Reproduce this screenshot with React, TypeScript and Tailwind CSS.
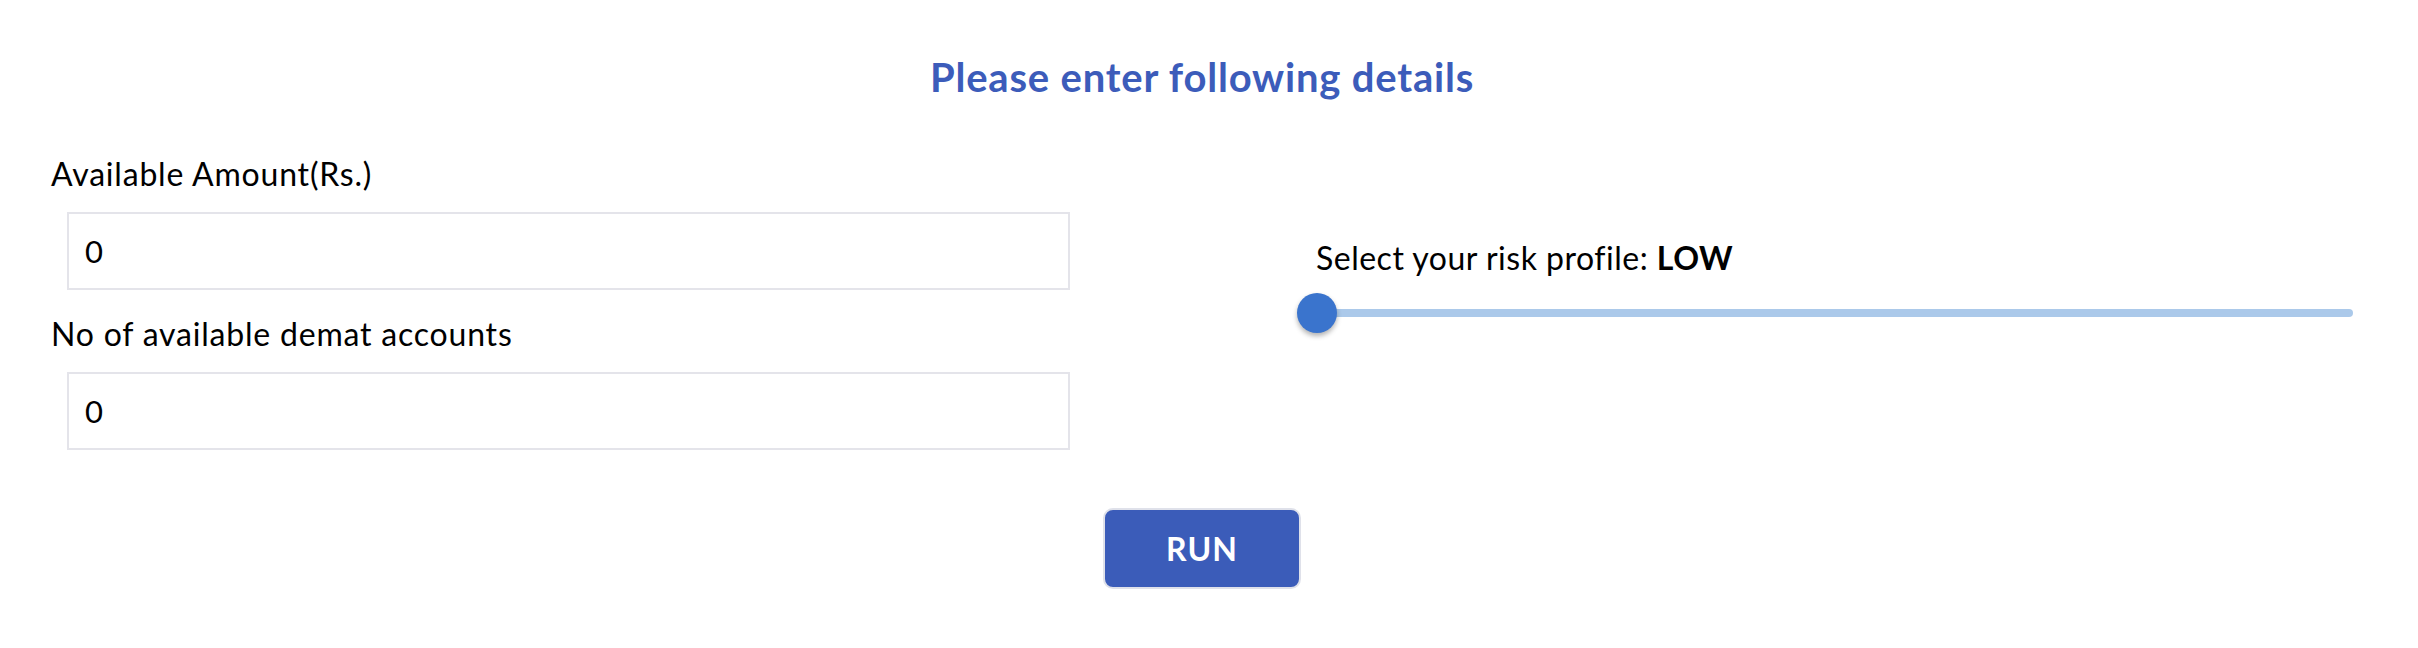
const Field = ({ label, value, top }: { label: string; value: string; top: string }) => (
  <div className={top}>
    <p className="text-[32px] leading-none tracking-[0.8px] text-black">{label}</p>
    <div className="mt-[22px] ml-[16px] w-[1003px] h-[78px] border-2 border-[#e4e4ea] flex items-center pl-[16px]">
      <span className="text-[31px] leading-none text-black">{value}</span>
    </div>
  </div>
);

const RiskSlider = () => (
  <div className="relative w-[1076px] h-[40px]">
    <div className="absolute left-[20px] right-[20px] top-[16px] h-[8px] rounded-full bg-[#abc9ea]" />
    <div className="absolute left-0 top-0 size-[40px] rounded-full bg-[#3a74cd] shadow-[0_3px_5px_rgba(0,0,0,0.3)]" />
  </div>
);

export default function App() {
  return (
    <div className="w-[2404px] h-[648px] bg-white font-['Lato',sans-serif]">
      <h1 className="pt-[57px] text-center text-[40px] font-bold leading-none tracking-[0.8px] text-[#3c5cba]">
        Please enter following details
      </h1>

      <div className="flex items-start mt-[61px]">
        <div className="w-[1297px] pl-[51px]">
          <Field label="Available Amount(Rs.)" value="0" top="" />
          <Field label="No of available demat accounts" value="0" top="mt-[28px]" />
        </div>
        <div className="mt-[84px]">
          <p className="pl-[19px] text-[32px] leading-none tracking-[0.5px] text-black">
            Select your risk profile: <span className="font-bold">LOW</span>
          </p>
          <div className="mt-[19px]">
            <RiskSlider />
          </div>
        </div>
      </div>

      <div className="flex justify-center mt-[58px]">
        <button className="w-[198px] h-[81px] rounded-[10px] border-2 border-[#dfe1ea] bg-[#3b5cb9] text-white text-[32px] font-bold leading-none tracking-[1px]">
          RUN
        </button>
      </div>
    </div>
  );
}
